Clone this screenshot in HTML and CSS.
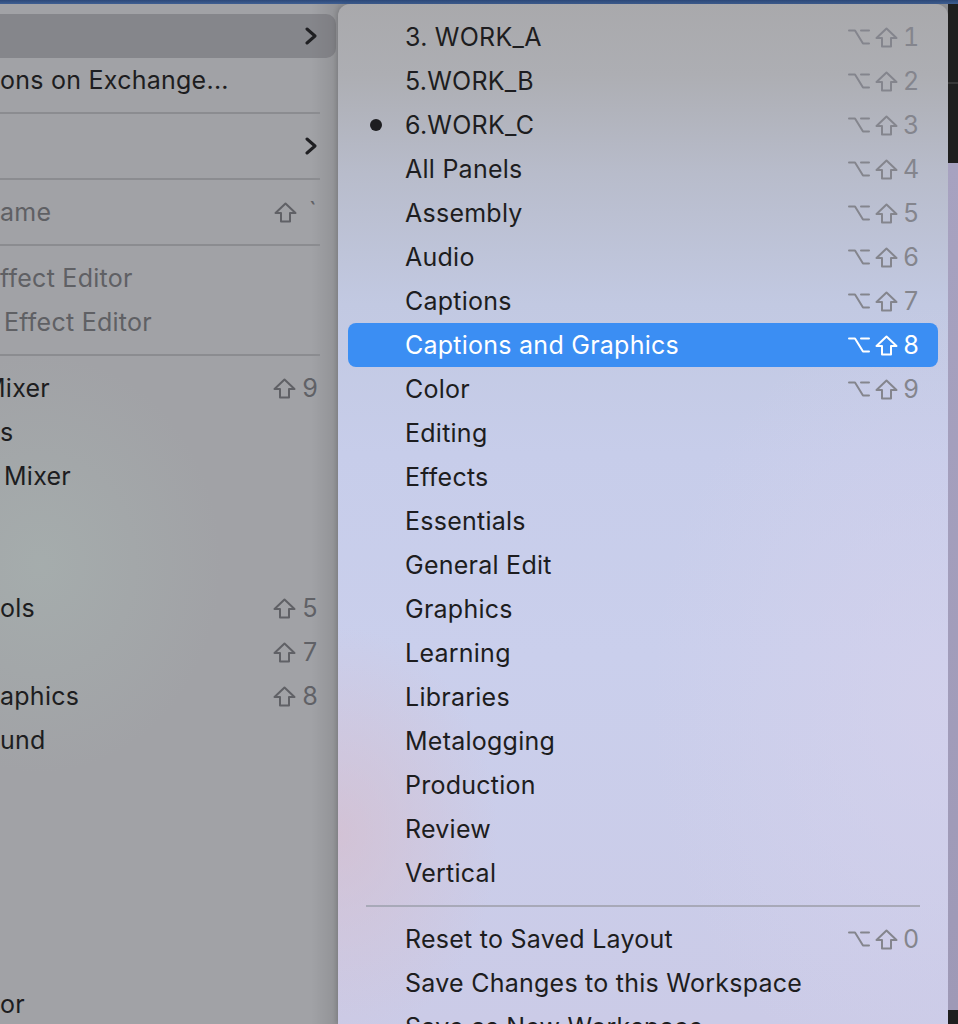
FILE: index.html
```html
<!DOCTYPE html>
<html lang="en">
<head>
<meta charset="utf-8">
<title>Workspaces menu</title>
<link rel="stylesheet" href="styles.css">
</head>
<body>
<div class="topbar"></div>
<div class="screen">
  <div class="main-menu">
    <div class="mrow hl"><span class="label"></span><svg class="chev" viewBox="0 0 12 18"><path d="M2 2 L10 9 L2 16"/></svg></div>
    <div class="mrow"><span class="label">ons on Exchange...</span></div>
    <div class="msep"></div>
    <div class="mrow"><span class="label"></span><svg class="chev" viewBox="0 0 12 18"><path d="M2 2 L10 9 L2 16"/></svg></div>
    <div class="msep"></div>
    <div class="mrow dis"><span class="label">ame</span><span class="mkey"><svg class="shift" viewBox="0 0 23 21"><path d="M11.5 1.5 L21.5 11 H16 V19.5 H7 V11 H1.5 Z"/></svg><span class="tick">`</span></span></div>
    <div class="msep"></div>
    <div class="mrow dis"><span class="label">ffect Editor</span></div>
    <div class="mrow dis"><span class="label ind">Effect Editor</span></div>
    <div class="msep"></div>
    <div class="mrow"><span class="label"><span class="cutm">M</span>ixer</span><span class="mkey"><svg class="shift" viewBox="0 0 23 21"><path d="M11.5 1.5 L21.5 11 H16 V19.5 H7 V11 H1.5 Z"/></svg><span class="dig">9</span></span></div>
    <div class="mrow"><span class="label">s</span></div>
    <div class="mrow"><span class="label ind">Mixer</span></div>
    <div class="mrow"><span class="label"></span></div>
    <div class="mrow"><span class="label"></span></div>
    <div class="mrow"><span class="label">ols</span><span class="mkey"><svg class="shift" viewBox="0 0 23 21"><path d="M11.5 1.5 L21.5 11 H16 V19.5 H7 V11 H1.5 Z"/></svg><span class="dig">5</span></span></div>
    <div class="mrow"><span class="label"></span><span class="mkey"><svg class="shift" viewBox="0 0 23 21"><path d="M11.5 1.5 L21.5 11 H16 V19.5 H7 V11 H1.5 Z"/></svg><span class="dig">7</span></span></div>
    <div class="mrow"><span class="label">aphics</span><span class="mkey"><svg class="shift" viewBox="0 0 23 21"><path d="M11.5 1.5 L21.5 11 H16 V19.5 H7 V11 H1.5 Z"/></svg><span class="dig">8</span></span></div>
    <div class="mrow"><span class="label">und</span></div>
    <div class="mrow"><span class="label"></span></div>
    <div class="mrow"><span class="label"></span></div>
    <div class="mrow"><span class="label"></span></div>
    <div class="mrow"><span class="label"></span></div>
    <div class="mrow"><span class="label"></span></div>
    <div class="mrow"><span class="label">or</span></div>
  </div>

  <div class="submenu">
    <div class="srow"><span class="mark"></span><span class="label">3. WORK_A</span><span class="skey"><svg class="opt" viewBox="0 0 22 18"><path d="M1 2.5 H7 L15 15.5 H21 M13 2.5 H21"/></svg><svg class="shift" viewBox="0 0 23 21"><path d="M11.5 1.5 L21.5 11 H16 V19.5 H7 V11 H1.5 Z"/></svg><span class="dig">1</span></span></div>
    <div class="srow"><span class="mark"></span><span class="label">5.WORK_B</span><span class="skey"><svg class="opt" viewBox="0 0 22 18"><path d="M1 2.5 H7 L15 15.5 H21 M13 2.5 H21"/></svg><svg class="shift" viewBox="0 0 23 21"><path d="M11.5 1.5 L21.5 11 H16 V19.5 H7 V11 H1.5 Z"/></svg><span class="dig">2</span></span></div>
    <div class="srow"><span class="mark"><span class="dot"></span></span><span class="label">6.WORK_C</span><span class="skey"><svg class="opt" viewBox="0 0 22 18"><path d="M1 2.5 H7 L15 15.5 H21 M13 2.5 H21"/></svg><svg class="shift" viewBox="0 0 23 21"><path d="M11.5 1.5 L21.5 11 H16 V19.5 H7 V11 H1.5 Z"/></svg><span class="dig">3</span></span></div>
    <div class="srow"><span class="mark"></span><span class="label">All Panels</span><span class="skey"><svg class="opt" viewBox="0 0 22 18"><path d="M1 2.5 H7 L15 15.5 H21 M13 2.5 H21"/></svg><svg class="shift" viewBox="0 0 23 21"><path d="M11.5 1.5 L21.5 11 H16 V19.5 H7 V11 H1.5 Z"/></svg><span class="dig">4</span></span></div>
    <div class="srow"><span class="mark"></span><span class="label">Assembly</span><span class="skey"><svg class="opt" viewBox="0 0 22 18"><path d="M1 2.5 H7 L15 15.5 H21 M13 2.5 H21"/></svg><svg class="shift" viewBox="0 0 23 21"><path d="M11.5 1.5 L21.5 11 H16 V19.5 H7 V11 H1.5 Z"/></svg><span class="dig">5</span></span></div>
    <div class="srow"><span class="mark"></span><span class="label">Audio</span><span class="skey"><svg class="opt" viewBox="0 0 22 18"><path d="M1 2.5 H7 L15 15.5 H21 M13 2.5 H21"/></svg><svg class="shift" viewBox="0 0 23 21"><path d="M11.5 1.5 L21.5 11 H16 V19.5 H7 V11 H1.5 Z"/></svg><span class="dig">6</span></span></div>
    <div class="srow"><span class="mark"></span><span class="label">Captions</span><span class="skey"><svg class="opt" viewBox="0 0 22 18"><path d="M1 2.5 H7 L15 15.5 H21 M13 2.5 H21"/></svg><svg class="shift" viewBox="0 0 23 21"><path d="M11.5 1.5 L21.5 11 H16 V19.5 H7 V11 H1.5 Z"/></svg><span class="dig">7</span></span></div>
    <div class="srow sel"><span class="mark"></span><span class="label">Captions and Graphics</span><span class="skey"><svg class="opt" viewBox="0 0 22 18"><path d="M1 2.5 H7 L15 15.5 H21 M13 2.5 H21"/></svg><svg class="shift" viewBox="0 0 23 21"><path d="M11.5 1.5 L21.5 11 H16 V19.5 H7 V11 H1.5 Z"/></svg><span class="dig">8</span></span></div>
    <div class="srow"><span class="mark"></span><span class="label">Color</span><span class="skey"><svg class="opt" viewBox="0 0 22 18"><path d="M1 2.5 H7 L15 15.5 H21 M13 2.5 H21"/></svg><svg class="shift" viewBox="0 0 23 21"><path d="M11.5 1.5 L21.5 11 H16 V19.5 H7 V11 H1.5 Z"/></svg><span class="dig">9</span></span></div>
    <div class="srow"><span class="mark"></span><span class="label">Editing</span></div>
    <div class="srow"><span class="mark"></span><span class="label">Effects</span></div>
    <div class="srow"><span class="mark"></span><span class="label">Essentials</span></div>
    <div class="srow"><span class="mark"></span><span class="label">General Edit</span></div>
    <div class="srow"><span class="mark"></span><span class="label">Graphics</span></div>
    <div class="srow"><span class="mark"></span><span class="label">Learning</span></div>
    <div class="srow"><span class="mark"></span><span class="label">Libraries</span></div>
    <div class="srow"><span class="mark"></span><span class="label">Metalogging</span></div>
    <div class="srow"><span class="mark"></span><span class="label">Production</span></div>
    <div class="srow"><span class="mark"></span><span class="label">Review</span></div>
    <div class="srow"><span class="mark"></span><span class="label">Vertical</span></div>
    <div class="ssep"></div>
    <div class="srow"><span class="mark"></span><span class="label">Reset to Saved Layout</span><span class="skey"><svg class="opt" viewBox="0 0 22 18"><path d="M1 2.5 H7 L15 15.5 H21 M13 2.5 H21"/></svg><svg class="shift" viewBox="0 0 23 21"><path d="M11.5 1.5 L21.5 11 H16 V19.5 H7 V11 H1.5 Z"/></svg><span class="dig">0</span></span></div>
    <div class="srow"><span class="mark"></span><span class="label">Save Changes to this Workspace</span></div>
    <div class="srow"><span class="mark"></span><span class="label">Save as New Workspace...</span></div>
  </div>

  <div class="side">
    <div class="side-dark a"></div>
    <div class="side-line"></div>
    <div class="side-dark b"></div>
    <div class="side-lav"></div>
    <div class="side-dark c"></div>
  </div>
</div>
</body>
</html>
```
FILE: styles.css
```css
* { box-sizing: border-box; }
html, body {
  margin: 0;
  width: 958px;
  height: 1024px;
  overflow: hidden;
}
body {
  background: #1f1f1f;
  font-family: Inter, "Noto Sans", "Liberation Sans", sans-serif;
  font-size: 25px;
  letter-spacing: 0.25px;
  color: #1d1d20;
}
.topbar {
  height: 4px;
  background: linear-gradient(to bottom, #2c4878, #3f5f92);
}
.screen {
  display: flex;
  height: 1020px;
  background: #8f9094;
}

/* ---- main (left) menu ---- */
.main-menu {
  width: 338px;
  flex: none;
  padding-top: 10px;
  overflow: hidden;
  background:
    linear-gradient(to right, rgba(0,0,0,0) 92%, rgba(0,0,0,0.10) 100%),
    radial-gradient(ellipse 260px 300px at 40px 560px, rgba(170,185,180,0.45), rgba(170,185,180,0) 70%),
    #a1a2a6;
}
.mrow {
  height: 44px;
  display: flex;
  align-items: center;
  padding-right: 19px;
  margin-right: 2px;
  white-space: nowrap;
}
.mrow.hl {
  background: rgba(105,106,111,0.5);
  border-radius: 0 10px 10px 0;
}
.mrow .label { flex: 1; overflow: hidden; }
.mrow.dis { color: #5f6064; }
.label.ind { padding-left: 4px; }
.cutm {
  display: inline-block;
  margin-left: -17px;
}
.chev {
  width: 12px;
  height: 18px;
  fill: none;
  stroke: #1f1f22;
  stroke-width: 3;
  stroke-linecap: round;
  stroke-linejoin: round;
}
.msep {
  height: 22px;
  display: flex;
  align-items: center;
}
.msep::before {
  content: "";
  display: block;
  width: 320px;
  height: 2px;
  background: #8b8c90;
}
.mkey {
  display: flex;
  align-items: center;
  gap: 6px;
  color: #606166;
}
.mkey .shift { stroke: #606166; }
.tick {
  width: 14px;
  text-align: right;
  align-self: flex-start;
  margin-top: -2px;
}
.dig {
  display: inline-block;
  width: 15px;
  text-align: left;
  font-variant-numeric: tabular-nums;
}

.shift, .opt {
  fill: none;
  stroke-width: 2;
  stroke-linejoin: round;
  stroke-linecap: round;
}
.shift { width: 23px; height: 21px; }
.opt { width: 22px; height: 18px; }

/* ---- submenu ---- */
.submenu {
  width: 610px;
  flex: none;
  border-radius: 12px 12px 0 0;
  padding-top: 11px;
  overflow: hidden;
  box-shadow: -2px 0 4px rgba(0,0,0,0.12);
  background:
    radial-gradient(ellipse 200px 260px at 0px 830px, rgba(214,190,205,0.7), rgba(214,190,205,0) 80%),
    radial-gradient(ellipse 360px 500px at 600px 700px, rgba(215,210,236,0.6), rgba(215,210,236,0) 80%),
    linear-gradient(to bottom, #a9a9ac 0px, #adaeb3 70px, #b8bccb 170px, #c2c9e2 300px, #c7cdea 450px, #cacfec 650px, #cbcbe7 1020px);
}
.srow {
  height: 44px;
  margin: 0 10px;
  padding: 0 20px 0 22px;
  display: flex;
  align-items: center;
  border-radius: 8px;
  white-space: nowrap;
}
.srow.sel {
  background: #3b8ef3;
  color: #ffffff;
}
.mark {
  width: 35px;
  flex: none;
  display: flex;
  align-items: center;
}
.dot {
  width: 12px;
  height: 12px;
  border-radius: 50%;
  background: #1d1d20;
}
.srow .label { flex: 1; }
.skey {
  display: flex;
  align-items: center;
  gap: 5px;
  color: #84858d;
  letter-spacing: 0;
}
.skey svg { stroke: #84858d; }
.srow.sel .skey { color: #ffffff; }
.srow.sel .skey svg { stroke: #ffffff; }
.ssep {
  height: 22px;
  display: flex;
  align-items: center;
  padding: 0 28px;
}
.ssep::before {
  content: "";
  display: block;
  flex: 1;
  height: 2px;
  background: #a8a9b8;
}

/* ---- right strip ---- */
.side {
  flex: 1;
  display: flex;
  flex-direction: column;
}
.side-dark { background: #1f1f1f; }
.side-dark.a { height: 78px; }
.side-line { height: 2px; background: #383838; }
.side-dark.b { height: 79px; }
.side-lav {
  flex: 1;
  background: linear-gradient(to bottom, #a7a2c0, #9e99b6);
}
.side-dark.c { height: 14px; }
```
